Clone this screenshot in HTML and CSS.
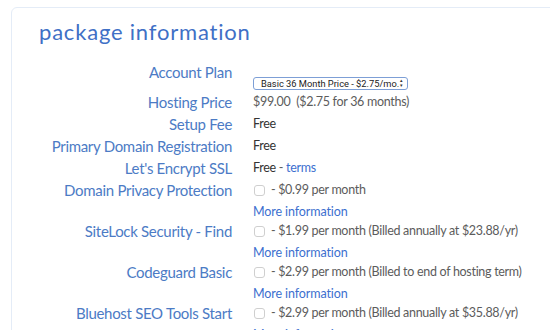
FILE: index.html
```html
<!DOCTYPE html>
<html lang="en">
<head>
<meta charset="utf-8">
<title>package information</title>
<link rel="stylesheet" href="styles.css">
</head>
<body>
	<div class="card">
		<h2 class="title">package information</h2>
		<div class="info">
			<div class="label plan">Account Plan</div>
			<div class="value plan">
				<span class="pick">
					<select>
						<option>Basic 36 Month Price - $2.75/mo.</option>
					</select>
				</span>
			</div>

			<div class="label">Hosting Price</div>
			<div class="value muted">$99.00 &nbsp;($2.75 for 36 months)</div>

			<div class="label">Setup Fee</div>
			<div class="value">Free</div>

			<div class="label">Primary Domain Registration</div>
			<div class="value">Free</div>

			<div class="label">Let's Encrypt SSL</div>
			<div class="value">Free <span class="muted">-</span> <a href="#">terms</a></div>

			<div class="label">Domain Privacy Protection</div>
			<div class="value muted">
				<label><input type="checkbox"> - $0.99 per month</label>
				<a class="more" href="#">More information</a>
			</div>

			<div class="label">SiteLock Security - Find</div>
			<div class="value muted">
				<label><input type="checkbox"> - $1.99 per month (Billed annually at $23.88/yr)</label>
				<a class="more" href="#">More information</a>
			</div>

			<div class="label">Codeguard Basic</div>
			<div class="value muted">
				<label><input type="checkbox"> - $2.99 per month (Billed to end of hosting term)</label>
				<a class="more" href="#">More information</a>
			</div>

			<div class="label">Bluehost SEO Tools Start</div>
			<div class="value muted">
				<label><input type="checkbox"> - $2.99 per month (Billed annually at $35.88/yr)</label>
				<a class="more" href="#">More information</a>
			</div>
		</div>
	</div>
</body>
</html>
```
FILE: styles.css
```css
html, body { margin: 0; overflow: hidden; background: #fff; }
body { font-family: Lato, "Open Sans", sans-serif; }

.card { margin: 7px 0 0 11px; width: 600px; height: 400px; border: 1px solid #e4ecf7; border-radius: 6px; padding-top: 8px; }
.title { margin: 0 0 13px 27px; font-size: 22px; line-height: 32px; font-weight: normal; letter-spacing: 0.8px; color: #3f70c6; }

.info { display: grid; grid-template-columns: 220px 1fr; column-gap: 21px; }
.label { font-size: 15px; line-height: 22px; letter-spacing: -0.3px; text-align: right; color: #4c7bc5; }
.value { font-size: 12.5px; line-height: 22px; letter-spacing: -0.3px; color: #333; }
.value.plan { height: 30px; }
.muted { color: #5c5c5c; }

a { color: #3c6fcf; text-decoration: none; }
.more { display: block; padding-top: 2px; line-height: 17px; letter-spacing: -0.1px; }

.pick { display: inline-block; position: relative; margin-top: 16px; vertical-align: top; }
.pick select { -webkit-appearance: none; appearance: none; display: block; width: 155px; height: 13px; margin: 0; padding: 0 0 0 7px; font-family: Roboto, sans-serif; font-size: 9.3px; line-height: 11px; letter-spacing: 0; color: #222; background: #fff; border: 1px solid #7d9fd6; border-radius: 3px; }
.pick::after { content: "\25B4\A\25BE"; white-space: pre; position: absolute; right: 5px; top: 1px; font-size: 5px; line-height: 5px; color: #333; }

input[type="checkbox"] { -webkit-appearance: none; appearance: none; width: 11px; height: 11px; margin: 0 3px 0 1px; vertical-align: -2px; border: 1px solid #cfcfcf; border-radius: 3px; background: #fff; }
```
